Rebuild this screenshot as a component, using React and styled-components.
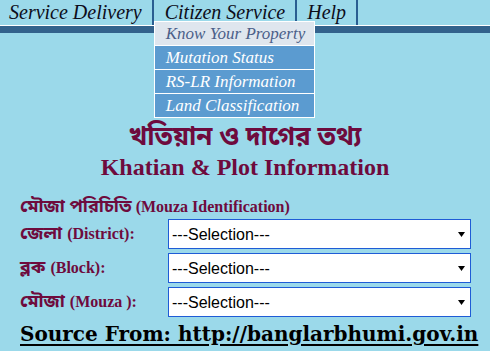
import React from "react";
import styled, { createGlobalStyle } from "styled-components";

const Global = createGlobalStyle`
  html, body { margin: 0; padding: 0; background: #9bd9ea; }
  body { font-family: "Liberation Serif", "Times New Roman", serif; }
  * { box-sizing: border-box; }
`;

const Page = styled.div`
  width: 490px;
  height: 351px;
  background: #9bd9ea;
  overflow: hidden;
`;

const NavBar = styled.nav`
  display: flex;
  height: 25px;
  align-items: stretch;
`;

const NavItem = styled.div`
  position: relative;
  display: flex;
  align-items: center;
  padding: 0 ${(p) => p.$pr}px 0 ${(p) => p.$pl}px;
  border-right: 2px solid #2a5e92;
  font-family: "Liberation Serif", "Times New Roman", serif;
  font-style: italic;
  font-size: 20px;
  color: #0d0d1a;
  white-space: nowrap;
`;

const Rule = styled.div`
  border-top: 1px solid #ffffff;
  height: 8px;
  background: #33628c;
`;

const Menu = styled.ul`
  position: absolute;
  left: 0;
  top: 21px;
  width: 161px;
  margin: 0;
  padding: 0;
  list-style: none;
  border: 1px solid #ffffff;
  border-bottom: none;
  z-index: 5;
`;

const MenuItem = styled.li`
  height: 24px;
  display: flex;
  align-items: center;
  padding-left: 11px;
  border-bottom: 1px solid #ffffff;
  background: ${(p) => (p.$active ? "#dfe6ee" : "#5b9bd0")};
  color: ${(p) => (p.$active ? "#4b5f89" : "#ffffff")};
  font-family: "Liberation Serif", "Times New Roman", serif;
  font-style: italic;
  font-size: 17px;
  white-space: nowrap;
`;

const Header = styled.header`
  display: flex;
  flex-direction: column;
  align-items: center;
  margin-top: 91px;
  color: #6e0b3d;
`;

const BengaliTitle = styled.h1`
  margin: 0;
  font-family: "Noto Sans Bengali", "Noto Serif Bengali", "Lohit Bengali", "Vrinda", sans-serif;
  font-weight: 700;
  font-size: 26px;
  line-height: 30px;
`;

const EnglishTitle = styled.h2`
  margin: 0;
  font-family: "Liberation Serif", "Times New Roman", serif;
  font-weight: 700;
  font-size: 24px;
  line-height: 26px;
`;

const Section = styled.div`
  padding: 0 19px 0 20px;
  margin-top: 17px;
  color: #6e0b3d;
`;

const Bn = styled.span`
  font-family: "Noto Sans Bengali", "Noto Serif Bengali", "Lohit Bengali", "Vrinda", sans-serif;
  font-weight: 700;
  font-size: ${(p) => p.$size || 18}px;
`;

const En = styled.span`
  font-family: "Liberation Serif", "Times New Roman", serif;
  font-weight: 700;
  font-size: ${(p) => p.$size || 16}px;
`;

const SectionTitle = styled.div`
  height: 20px;
  display: flex;
  align-items: center;
  gap: 4px;
  white-space: nowrap;
`;

const Form = styled.div`
  display: grid;
  grid-template-columns: 148px 303px;
  row-gap: 4px;
  margin-top: 2px;
`;

const Label = styled.label`
  display: flex;
  align-items: center;
  gap: 5px;
  white-space: nowrap;
`;

const SelectWrap = styled.div`
  position: relative;
  height: 30px;
`;

const Select = styled.select`
  appearance: none;
  -webkit-appearance: none;
  width: 100%;
  height: 100%;
  border: 1px solid #1f5cd6;
  border-radius: 0;
  background: #ffffff;
  padding: 0 0 0 3px;
  font-family: "Liberation Sans", Arial, sans-serif;
  font-size: 16px;
  color: #000;
  outline: none;
`;

const Arrow = styled.svg`
  position: absolute;
  right: 6px;
  top: 12px;
  pointer-events: none;
`;

const Source = styled.div`
  margin-top: 3px;
  font-family: "DejaVu Serif", "Liberation Serif", serif;
  font-weight: 700;
  font-size: 20px;
  line-height: 28px;
  color: #000;
  text-decoration: underline;
  text-decoration-thickness: 2px;
  text-underline-offset: 3px;
  white-space: nowrap;
`;

const rows = [
  { bn: "জেলা", en: "(District):" },
  { bn: "ব্লক", en: "(Block):" },
  { bn: "মৌজা", en: "(Mouza ):" },
];

export default function App() {
  return (
    <Page>
      <Global />
      <NavBar>
        <NavItem $pl={9} $pr={10}>Service Delivery</NavItem>
        <NavItem $pl={11} $pr={10}>
          Citizen Service
          <Menu>
            <MenuItem $active>Know Your Property</MenuItem>
            <MenuItem>Mutation Status</MenuItem>
            <MenuItem>RS-LR Information</MenuItem>
            <MenuItem>Land Classification</MenuItem>
          </Menu>
        </NavItem>
        <NavItem $pl={10} $pr={10}>Help</NavItem>
      </NavBar>
      <Rule />
      <Header>
        <BengaliTitle>খতিয়ান ও দাগের তথ্য</BengaliTitle>
        <EnglishTitle>Khatian &amp; Plot Information</EnglishTitle>
      </Header>
      <Section>
        <SectionTitle>
          <Bn $size={18}>মৌজা পরিচিতি</Bn>
          <En $size={16}>(Mouza Identification)</En>
        </SectionTitle>
        <Form>
          {rows.map((r) => (
            <React.Fragment key={r.en}>
              <Label>
                <Bn>{r.bn}</Bn>
                <En>{r.en}</En>
              </Label>
              <SelectWrap>
                <Select defaultValue="">
                  <option value="">---Selection---</option>
                </Select>
                <Arrow width="7" height="7" viewBox="0 0 7 7">
                  <path d="M0 1 L7 1 L3.5 6 Z" fill="#000" />
                </Arrow>
              </SelectWrap>
            </React.Fragment>
          ))}
        </Form>
        <Source>Source From: http://banglarbhumi.gov.in</Source>
      </Section>
    </Page>
  );
}
